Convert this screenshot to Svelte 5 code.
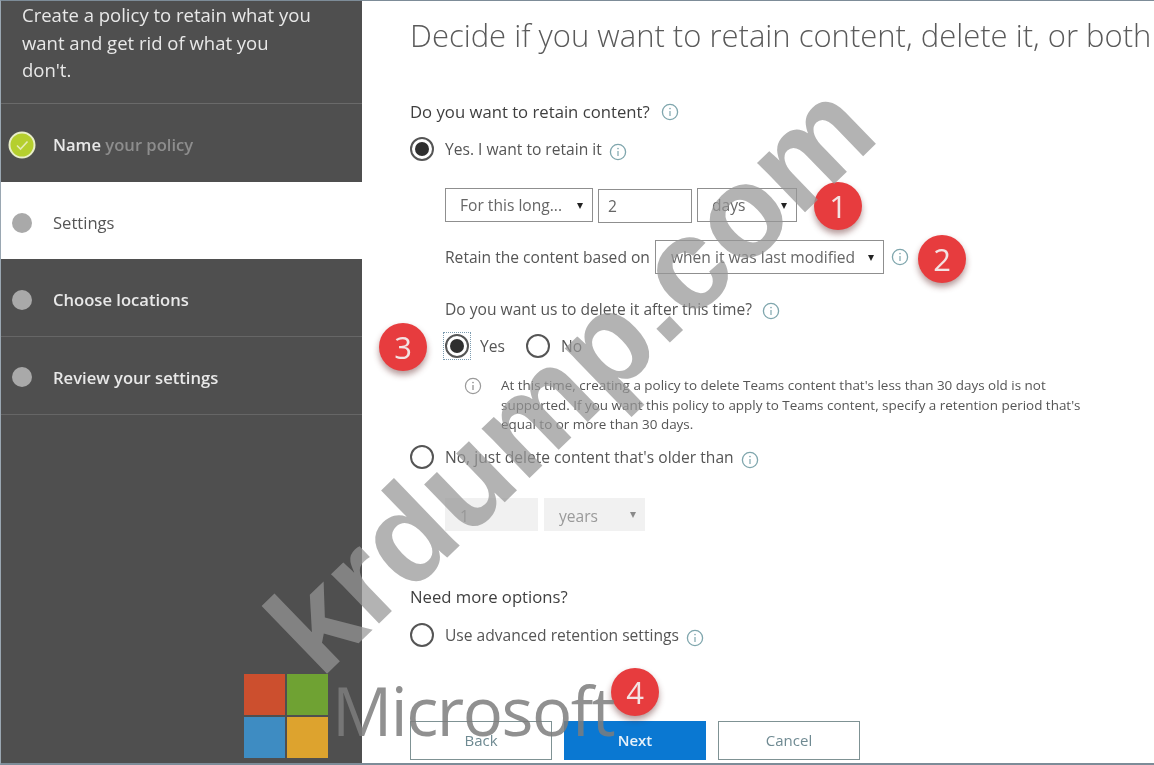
<script>
  const steps = [
    { label: 'Name', rest: ' your policy', state: 'done' },
    { label: 'Settings', state: 'current' },
    { label: 'Choose locations', state: 'todo' },
    { label: 'Review your settings', state: 'todo' }
  ];
</script>

{#snippet info(cls = '')}
  <svg class="info {cls}" width="18" height="18" viewBox="0 0 18 18">
    <circle cx="9" cy="9" r="7.6" fill="none" stroke="#7fa6ad" stroke-width="1.3" />
    <path d="M9 8v5" stroke="#7fa6ad" stroke-width="1.2" />
    <circle cx="9" cy="5.6" r=".8" fill="#7fa6ad" />
  </svg>
{/snippet}

{#snippet radio(on = false)}
  <span class="radio" class:on></span>
{/snippet}

<div class="page">
  <aside class="side">
    <p class="intro">Create a policy to retain what you want and get rid of what you don't.</p>
    <ul class="steps">
      {#each steps as step}
        <li class={step.state}>
          {#if step.state === 'done'}
            <svg width="28" height="28" viewBox="0 0 28 28" class="dot-check">
              <circle cx="14" cy="14" r="12.5" fill="#b5cf2e" stroke="#e8eec8" stroke-width="2" />
              <path d="M9 14.5l3.5 3.5 7-7.5" fill="none" stroke="#e4ecb4" stroke-width="1.6" />
            </svg>
          {:else}
            <span class="dot"></span>
          {/if}
          <span class="name">{step.label}{#if step.rest}<em>{step.rest}</em>{/if}</span>
        </li>
      {/each}
    </ul>
  </aside>

  <main class="main">
    <h1>Decide if you want to retain content, delete it, or both</h1>

    <h2 class="retain-q">Do you want to retain content? {@render info('spaced')}</h2>

    <div class="choice yes-retain">
      {@render radio(true)}
      <span>Yes. I want to retain it</span>
      {@render info('low')}
    </div>

    <div class="sub">
      <div class="fields">
        <div class="select w148">For this long...<i class="caret"></i></div>
        <div class="select w94 plain">2</div>
        <div class="select w100 centered">days<i class="caret"></i></div>
      </div>

      <div class="based">
        <span>Retain the content based on</span>
        <div class="select w229">when it was last modified<i class="caret"></i></div>
        {@render info()}
      </div>

      <p class="delete-q">Do you want us to delete it after this time? {@render info('spaced')}</p>

      <div class="yes-no">
        <span class="focus">{@render radio(true)}</span>
        <span class="yes">Yes</span>
        {@render radio(false)}
        <span>No</span>
      </div>

      <div class="note">
        <svg class="note-icon" width="18" height="18" viewBox="0 0 18 18">
          <circle cx="9" cy="9" r="7.6" fill="none" stroke="#9a9a9a" stroke-width="1.2" />
          <path d="M9 8v5" stroke="#8a8a8a" stroke-width="1.2" />
          <circle cx="9" cy="5.6" r=".8" fill="#8a8a8a" />
        </svg>
        <p>At this time, creating a policy to delete Teams content that's less than 30 days old is not supported. If you want this policy to apply to Teams content, specify a retention period that's equal to or more than 30 days.</p>
      </div>
    </div>

    <div class="choice just-delete">
      {@render radio(false)}
      <span>No, just delete content that's older than</span>
      {@render info('low')}
    </div>

    <div class="sub disabled">
      <div class="off w93">1</div>
      <div class="off w101">years<i class="caret light"></i></div>
    </div>

    <h2 class="more">Need more options?</h2>

    <div class="choice advanced">
      {@render radio(false)}
      <span>Use advanced retention settings</span>
      {@render info('low')}
    </div>

    <div class="buttons">
      <button>Back</button>
      <button class="primary">Next</button>
      <button>Cancel</button>
    </div>
  </main>

  <b class="badge b1">1</b>
  <b class="badge b2">2</b>
  <b class="badge b3">3</b>
  <b class="badge b4">4</b>

  <div class="watermark">krdump.com</div>

  <div class="logo">
    <div class="squares">
      <i class="red"></i><i class="green"></i><i class="blue"></i><i class="yellow"></i>
    </div>
    <span>Microsoft</span>
  </div>
</div>

<style>
  :global(body) {
    margin: 0;
    background: #fff;
  }
  .page {
    position: relative;
    width: 1154px;
    height: 765px;
    box-sizing: border-box;
    display: flex;
    overflow: hidden;
    background: #fff;
    font-family: "Open Sans", "Noto Sans", sans-serif;
    color: #555;
    border-top: 1px solid #7d8c98;
    border-bottom: 2px solid #7d8c98;
    border-left: 1px solid #9aa7b2;
    filter: blur(.45px);
  }
  .side {
    flex: 0 0 361px;
    background: #4f4f4f;
    color: #e8e8e8;
  }
  .intro {
    margin: 0;
    height: 103px;
    box-sizing: border-box;
    padding: 0 40px 0 21px;
    font-size: 18.5px;
    line-height: 27.5px;
    border-bottom: 1px solid #6a6a6a;
  }
  .steps {
    list-style: none;
    margin: 0;
    padding: 0;
  }
  .steps li {
    height: 77.7px;
    display: flex;
    align-items: center;
    box-sizing: border-box;
    padding: 4px 0 0 10px;
    position: relative;
    border-bottom: 1px solid #666;
    font-size: 16.6px;
    font-weight: 600;
  }
  .steps li.done {
    border-bottom: 0;
  }
  .steps li.current {
    background: #fff;
    color: #555;
    border-bottom: 0;
    font-weight: 500;
  }
  .dot {
    width: 20px;
    height: 20px;
    margin: 0 21px 0 1px;
    border-radius: 50%;
    background: #a9a9a9;
  }
  .dot-check {
    margin: 0 17px 0 -3px;
  }
  .name em {
    font-style: normal;
    color: #8d8d8d;
  }
  .main {
    flex: 1;
    min-width: 0;
    padding-left: 48px;
    white-space: nowrap;
  }
  h1 {
    margin: 16px 0 0;
    font-size: 31px;
    line-height: 36px;
    font-weight: 300;
    color: #5a5a5a;
  }
  h2 {
    margin: 0;
    font-size: 16.7px;
    line-height: 22px;
    font-weight: 500;
    color: #3f3f3f;
    display: flex;
    align-items: center;
    gap: 5px;
  }
  .retain-q {
    margin-top: 48px;
  }
  .choice {
    display: flex;
    align-items: center;
    font-size: 15.6px;
    height: 26px;
    gap: 11px;
  }
  .yes-retain {
    margin-top: 13px;
  }
  .info {
    flex: none;
    vertical-align: middle;
  }
  .info.low {
    margin: 6px 0 0 -4px;
  }
  .info.spaced {
    margin-left: 6px;
  }
  .radio {
    flex: none;
    display: inline-block;
    box-sizing: border-box;
    width: 24px;
    height: 24px;
    border: 2px solid #555;
    border-radius: 50%;
    position: relative;
    background: #fff;
  }
  .radio.on::after {
    content: "";
    position: absolute;
    inset: 3px;
    border-radius: 50%;
    background: #2f2f2f;
  }
  .sub {
    padding-left: 35px;
    font-size: 15.6px;
  }
  .fields {
    display: flex;
    gap: 5px;
    margin-top: 26px;
  }
  .select {
    position: relative;
    box-sizing: border-box;
    height: 34px;
    line-height: 33px;
    border: 1px solid #8f8f8f;
    padding-left: 14px;
    color: #666;
  }
  .plain {
    padding-left: 9px;
    margin-top: 1px;
  }
  .centered {
    padding-left: 14px;
  }
  .w148 { width: 148px; }
  .w94 { width: 94px; }
  .w100 { width: 100px; }
  .w229 { width: 229px; }
  .w93 { width: 93px; }
  .w101 { width: 101px; }
  .caret {
    position: absolute;
    right: 9px;
    top: 14px;
    width: 0;
    height: 0;
    border: 3.5px solid transparent;
    border-top: 6px solid #222;
    border-bottom: 0;
  }
  .caret.light {
    border-top-color: #8a8a8a;
    top: 14px;
  }
  .based {
    display: flex;
    align-items: center;
    margin-top: 17px;
    gap: 5px;
  }
  .based .select {
    padding-left: 15px;
  }
  .based .info {
    margin-left: 2px;
  }
  .delete-q {
    margin: 24px 0 0;
    line-height: 22px;
  }
  .yes-no {
    display: flex;
    align-items: center;
    margin-top: 12px;
    height: 28px;
    gap: 11px;
    margin-left: -1px;
  }
  .focus {
    display: flex;
    padding: 1px;
    outline: 1px dotted #7d9cb0;
  }
  .yes {
    margin: 0 10px 0 -1px;
  }
  .note {
    display: flex;
    margin-top: 17px;
    padding-left: 19px;
    gap: 19px;
    font-size: 13.45px;
    line-height: 19.5px;
  }
  .note-icon {
    flex: none;
  }
  .note p {
    margin: -1px 0 0;
    width: 595px;
    white-space: normal;
  }
  .just-delete {
    margin-top: 9px;
  }
  .disabled {
    display: flex;
    gap: 6px;
    margin-top: 28px;
  }
  .off {
    position: relative;
    box-sizing: border-box;
    height: 33px;
    line-height: 36px;
    padding-left: 15px;
    background: #f1f1f1;
    color: #9a9a9a;
  }
  .more {
    margin-top: 55px;
  }
  .advanced {
    margin-top: 14px;
  }
  .buttons {
    display: flex;
    gap: 12px;
    margin-top: 73px;
  }
  button {
    width: 142px;
    height: 39px;
    padding: 0;
    box-sizing: border-box;
    background: #fff;
    border: 1.5px solid #7f9294;
    font: 15px "Open Sans", "Noto Sans", sans-serif;
    color: #6f8a92;
  }
  button.primary {
    background: #0a78d2;
    border-color: #0a78d2;
    color: #e8f2fa;
    font-weight: 600;
  }
  .badge {
    position: absolute;
    width: 48px;
    height: 48px;
    border-radius: 50%;
    background: #e73c3e;
    color: #f3e3e3;
    font-size: 31px;
    font-weight: 400;
    line-height: 48px;
    text-align: center;
    box-shadow: 0 4px 6px rgba(90, 30, 30, .45);
  }
  .b1 { left: 813px; top: 181px; }
  .b2 { left: 917px; top: 234px; }
  .b3 { left: 378px; top: 322px; }
  .b4 { left: 610px; top: 667px; }
  .watermark {
    position: absolute;
    left: 322px;
    top: 569px;
    font: bold 130px/128px "Liberation Sans", Arial, sans-serif;
    color: rgba(149, 149, 149, .72);
    white-space: nowrap;
    transform: rotate(-44deg);
    transform-origin: 0 88%;
  }
  .logo {
    position: absolute;
    left: 243px;
    top: 673px;
    display: flex;
  }
  .squares {
    display: grid;
    grid-template-columns: 41px 41px;
    grid-auto-rows: 41px;
    gap: 2px;
  }
  .squares i { display: block; }
  .red { background: #cc4f2e; }
  .green { background: #6fa233; }
  .blue { background: #3e8cc2; }
  .yellow { background: #dda32e; }
  .logo span {
    margin: 0 0 0 4px;
    font-size: 67px;
    line-height: 72px;
    font-family: "Open Sans", sans-serif;
    color: rgba(125, 125, 125, .85);
    letter-spacing: -1.5px;
  }
</style>
